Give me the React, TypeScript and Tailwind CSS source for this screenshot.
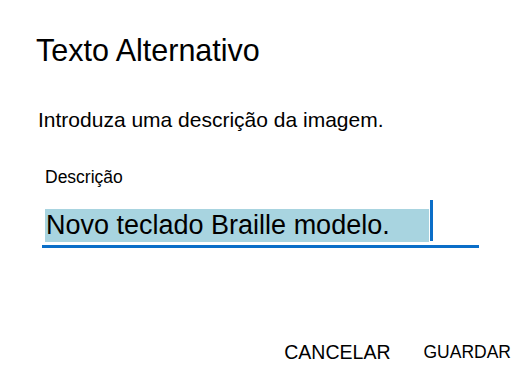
import React from 'react';

const App: React.FC = () => {
  return (
    <div className="w-[520px] h-[380px] bg-white text-black overflow-hidden" style={{ fontFamily: '"Liberation Sans", Arial, sans-serif' }}>
      <div className="pl-[36px] pt-[32px]">
        <h1 className="text-[30.5px] leading-[36px] font-normal">Texto Alternativo</h1>
        <p className="mt-[40px] ml-[2px] text-[21px] leading-[24px]">Introduza uma descrição da imagem.</p>
      </div>

      {/* Description field */}
      <div className="ml-[42px] w-[437px] mt-[35px]">
        <label className="block ml-[3px] text-[17.5px] leading-[20px]">Descrição</label>
        <div className="mt-[13px] flex items-start">
          <div className="mt-[9px] ml-[3px] w-[384px] h-[33px] bg-[#a8d4e0] text-[27px] leading-[33px] whitespace-nowrap pl-[1px]">
            Novo teclado Braille modelo.
          </div>
          <div className="ml-[1px] w-[3px] h-[41px] bg-[#0a6ec8]" />
        </div>
        <div className="mt-[3px] h-[3px] bg-[#0a6ec8]" />
      </div>

      {/* Actions */}
      <div className="mt-[92px] pr-[9px] flex justify-end items-baseline gap-[33px]">
        <button className="text-[19.5px] leading-[24px]">CANCELAR</button>
        <button className="text-[17.5px] leading-[24px] -translate-y-[1px]">GUARDAR</button>
      </div>
    </div>
  );
};

export default App;
